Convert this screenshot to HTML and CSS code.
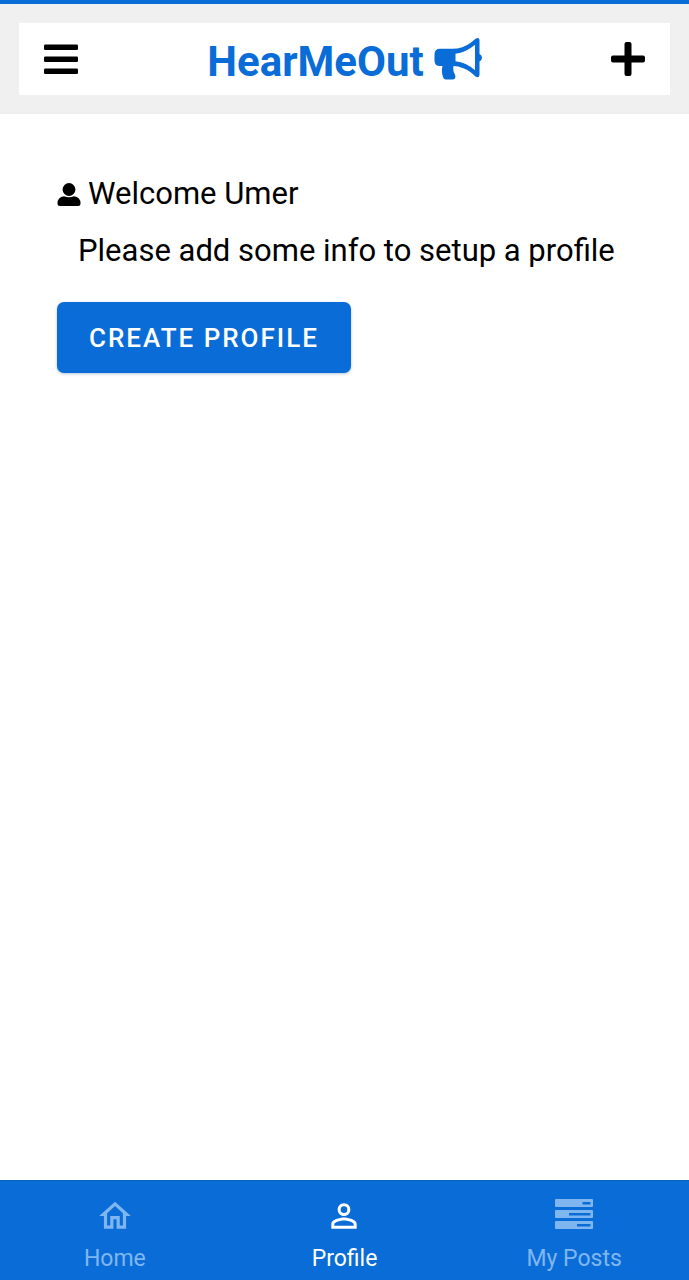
FILE: index.html
```html
<!DOCTYPE html>
<html lang="en">
<head>
<meta charset="utf-8">
<meta name="viewport" content="width=device-width, initial-scale=1">
<title>HearMeOut</title>
<link rel="stylesheet" href="styles.css">
</head>
<body>
<header class="header">
  <div class="toolbar">
    <button class="icon-button" type="button" aria-label="Menu">
      <svg width="34" height="34" viewBox="0 0 34 34" fill="currentColor" aria-hidden="true">
        <rect x="0" y="2.500" width="34" height="5.500" rx="1.200"/><rect x="0" y="14.500" width="34" height="5.500" rx="1.200"/><rect x="0" y="26.500" width="34" height="5.500" rx="1.200"/>
      </svg>
    </button>
    <h1 class="brand">
      <span class="brand-name">HearMeOut</span>
      <svg width="48" height="42" viewBox="0 0 48 42" aria-hidden="true">
        <path fill="currentColor" fill-rule="evenodd" d="M41.500 .8Q45 -1.200 45.500 2V16Q48 17.200 48 19.800T45.500 23.600V37Q45 40.500 41.500 38.500L37 34.500Q29 28.500 19.500 28Q18.500 33 21 36.500Q22.500 41 18.500 41.500H12Q9.500 41.500 9 39Q7 33.500 8.500 28H6Q.5 28 .5 22.500V16.500Q.5 10.800 6 10.800H18Q29 10.800 37 4.500ZM41 6.800Q32 14.500 21.500 15.700V23.300Q32 24.500 41 32.200Z"/>
      </svg>
    </h1>
    <button class="icon-button" type="button" aria-label="Add post">
      <svg width="34" height="34" viewBox="0 0 34 34" fill="currentColor" aria-hidden="true">
        <path d="M15.500 0H18.500Q20.500 0 20.500 2V13.500H32Q34 13.500 34 15.500V18.500Q34 20.500 32 20.500H20.500V32Q20.500 34 18.500 34H15.500Q13.500 34 13.500 32V20.500H2Q0 20.500 0 18.500V15.500Q0 13.500 2 13.500H13.500V2Q13.500 0 15.500 0Z"/>
      </svg>
    </button>
  </div>
</header>
<main class="content">
  <p class="welcome">
    <svg width="24" height="26" viewBox="0 0 24 26" fill="currentColor" aria-hidden="true">
      <circle cx="12" cy="8.500" r="6.400"/><path d="M7 15.300Q12 17.300 17 15.300Q23.500 16 23.500 22.500Q23.500 25 21 25H3Q.5 25 .5 22.500Q.5 16 7 15.300Z"/>
    </svg>
    <span>Welcome Umer</span>
  </p>
  <p class="hint">Please add some info to setup a profile</p>
  <button class="primary-button" type="button">CREATE PROFILE</button>
</main>
<nav class="tabs" aria-label="Main">
  <a class="tab" href="#home">
    <svg width="38" height="38" viewBox="0 0 24 24" fill="currentColor" aria-hidden="true">
      <path d="M12 5.690l5 4.500V18h-2v-6H9v6H7v-7.810l5-4.500M12 3L2 12h3v8h6v-6h2v6h6v-8h3L12 3z"/>
    </svg>
    Home
  </a>
  <a class="tab tab-active" href="#profile" aria-current="page">
    <svg width="38" height="38" viewBox="0 0 24 24" fill="currentColor" aria-hidden="true">
      <path d="M12 5.900a2.100 2.100 0 1 1 0 4.200 2.100 2.100 0 0 1 0-4.200m0 9c2.970 0 6.100 1.460 6.100 2.100v1.100H5.900V17c0-.640 3.130-2.100 6.100-2.100M12 4C9.790 4 8 5.790 8 8s1.790 4 4 4 4-1.790 4-4-1.790-4-4-4zm0 9c-2.670 0-8 1.340-8 4v3h16v-3c0-2.660-5.330-4-8-4z"/>
    </svg>
    Profile
  </a>
  <a class="tab" href="#posts">
    <svg width="38" height="38" viewBox="0 0 38 38" fill="currentColor" fill-rule="evenodd" aria-hidden="true">
      <path d="M1 2H37Q38 2 38 3V9Q38 10 37 10H1Q0 10 0 9V3Q0 2 1 2ZM27.500 5V7.500H35.500V5Z"/>
      <path d="M1 13H37Q38 13 38 14V20Q38 21 37 21H1Q0 21 0 20V14Q0 13 1 13ZM14 16V18.500H35.500V16Z"/>
      <path d="M1 24H37Q38 24 38 25V31Q38 32 37 32H1Q0 32 0 31V25Q0 24 1 24ZM22 27V29.500H35.500V27Z"/>
    </svg>
    My Posts
  </a>
</nav>
</body>
</html>
```
FILE: styles.css
```css
* {
  box-sizing: border-box;
}

body {
  margin: 0;
  min-height: 100vh;
  display: flex;
  flex-direction: column;
  background: #fff;
  color: #000;
  font-family: Roboto, "Liberation Sans", sans-serif;
}

svg {
  display: block;
  flex: none;
}

.header {
  padding: 19px;
  border-top: 4px solid #0a6cd6;
  background: #f0f0f0;
}

.toolbar {
  display: flex;
  align-items: center;
  justify-content: space-between;
  height: 72px;
  padding: 0 25px;
  background: #fff;
}

.icon-button {
  padding: 0;
  border: 0;
  background: none;
  color: inherit;
  cursor: pointer;
}

.brand {
  display: flex;
  align-items: center;
  gap: 10px;
  margin: 0;
  color: #0a6cd6;
  font-size: 42px;
  font-weight: 700;
  line-height: 48px;
}

.brand-name {
  padding-top: 5px;
}

.content {
  flex: 1;
  padding: 60px 57px;
  font-size: 31px;
  line-height: 40px;
}

.welcome {
  display: flex;
  align-items: center;
  gap: 7px;
  margin: 0 0 17px;
}

.hint {
  margin: 0 0 31px;
  padding-left: 21px;
}

.primary-button {
  padding: 21px 32px 19px;
  border: 0;
  border-radius: 7px;
  background: #0a6cd6;
  box-shadow: 0 1px 3px rgba(0, 60, 130, 0.3);
  color: #fff;
  font: 500 26px/31px Roboto, "Liberation Sans", sans-serif;
  letter-spacing: 2px;
  cursor: pointer;
}

.tabs {
  display: grid;
  grid-template-columns: repeat(3, 1fr);
  padding: 16px 0 7px;
  border-top: 1px solid #0a60bd;
  background: #0a6cd6;
}

.tab {
  display: flex;
  flex-direction: column;
  align-items: center;
  gap: 10px;
  color: #80b6f0;
  font-size: 23px;
  line-height: 28px;
  text-decoration: none;
}

.tab-active {
  color: #fff;
}
```
